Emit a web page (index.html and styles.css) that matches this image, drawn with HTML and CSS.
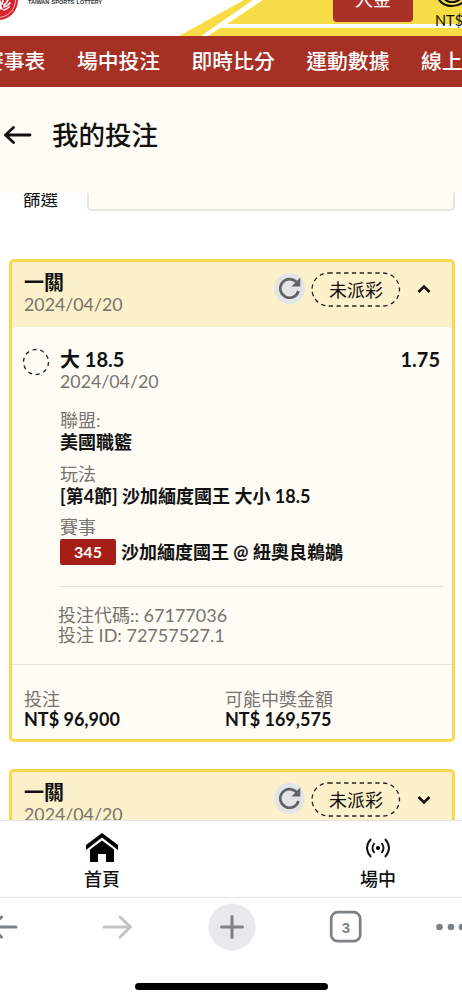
FILE: index.html
```html
<!DOCTYPE html>
<html lang="zh-Hant">
<head>
<meta charset="utf-8">
<meta name="viewport" content="width=device-width, initial-scale=1">
<title>我的投注</title>
<link rel="stylesheet" href="styles.css">
</head>
<body>
<div class="app">
  <header class="top">
    <svg class="top-art" width="462" height="36" viewBox="0 0 462 36">
      <path fill="#f8dc46" d="M179 36 244 0H462V36Z"/>
      <path fill="#fff" d="M201 36 253 0H263L227 24H462V28H220L208 36Z"/>
    </svg>
    <svg class="logo" width="20" height="22" viewBox="0 0 20 22">
      <circle cx="-2" cy="0" r="20" fill="#d8232f"/>
      <circle cx="-2" cy="0" r="17.5" fill="none" stroke="#fff" stroke-width=".7"/>
      <path fill="none" stroke="#fff" stroke-width="1.7" stroke-linecap="round" d="M0 1 1 9M3 0 2 4M8 0Q7 3 4 5M10 3Q8 6 4 7M9 7Q7 9 4 10M-1 4 2 9"/>
    </svg>
    <span class="logo-text">TAIWAN SPORTS LOTTERY</span>
    <button class="deposit">入金</button>
    <div class="balance">
      <svg width="26" height="9" viewBox="0 0 26 9"><path fill="none" stroke="#111" stroke-width="2.2" d="M1-2Q5 6 15 6T29-2M7-2Q9 2 15 2T24-2"/></svg>
      <span>NT$</span>
    </div>
  </header>
  <nav class="menu"><a>賽事表</a><a>場中投注</a><a>即時比分</a><a>運動數據</a><a>線上</a></nav>
  <div class="title">
    <svg width="28" height="20" viewBox="0 0 28 20"><path fill="none" stroke="#111" stroke-width="2.8" stroke-linecap="round" stroke-linejoin="round" d="M26 10H1.500M9.500 2.500 1.500 10 9.500 17.500"/></svg>
    <h1>我的投注</h1>
  </div>
  <main class="content">
    <div class="filter"><label>篩選</label><div class="field"></div></div>
    <section class="card">
      <div class="card-head">
        <div class="card-name"><b>一關</b><span>2024/04/20</span></div>
        <svg class="refresh" width="31" height="31" viewBox="0 0 31 31"><circle cx="15.500" cy="15.500" r="15.500" fill="#e3e4e6"/><path fill="none" stroke="#626366" stroke-width="2.700" d="M22.500 9.200A9.300 9.300 0 1 0 24.500 18"/><path fill="#626366" d="M26.300 4.500V13.500H17.500Z"/></svg>
        <div class="status"><svg width="90" height="35" viewBox="0 0 90 35"><rect x="1" y="1" width="87.500" height="33" rx="16.500" fill="none" stroke="#222" stroke-width="1.300" stroke-dasharray="4.300 3.500"/></svg><span>未派彩</span></div>
        <svg class="chev" width="14" height="10" viewBox="0 0 14 10"><path fill="none" stroke="#111" stroke-width="2.600" d="M1.500 8 7 2.500 12.500 8"/></svg>
      </div>
      <div class="bet">
        <svg class="ring" width="28" height="28" viewBox="0 0 28 28"><circle cx="14" cy="14" r="12.500" fill="none" stroke="#222" stroke-width="1.300" stroke-dasharray="4.100 3.750"/></svg>
        <div class="bet-info">
          <div class="pick"><b>大 18.5</b><b>1.75</b></div>
          <div class="muted date">2024/04/20</div>
          <dl>
            <dt>聯盟:</dt><dd>美國職籃</dd>
            <dt>玩法</dt><dd>[第4節] 沙加緬度國王 大小 18.5</dd>
            <dt>賽事</dt><dd class="match"><span class="tag">345</span>沙加緬度國王 @ 紐奧良鵜鶘</dd>
          </dl>
          <div class="codes"><div>投注代碼:: 67177036</div><div>投注 ID: 72757527.1</div></div>
        </div>
      </div>
      <div class="totals">
        <div><span>投注</span><b>NT$ 96,900</b></div>
        <div><span>可能中獎金額</span><b>NT$ 169,575</b></div>
      </div>
    </section>
    <section class="card">
      <div class="card-head">
        <div class="card-name"><b>一關</b><span>2024/04/20</span></div>
        <svg class="refresh" width="31" height="31" viewBox="0 0 31 31"><circle cx="15.500" cy="15.500" r="15.500" fill="#e3e4e6"/><path fill="none" stroke="#626366" stroke-width="2.700" d="M22.500 9.200A9.300 9.300 0 1 0 24.500 18"/><path fill="#626366" d="M26.300 4.500V13.500H17.500Z"/></svg>
        <div class="status"><svg width="90" height="35" viewBox="0 0 90 35"><rect x="1" y="1" width="87.500" height="33" rx="16.500" fill="none" stroke="#222" stroke-width="1.300" stroke-dasharray="4.300 3.500"/></svg><span>未派彩</span></div>
        <svg class="chev" width="14" height="10" viewBox="0 0 14 10"><path fill="none" stroke="#111" stroke-width="2.600" d="M1.500 3 7 8.500 12.500 3"/></svg>
      </div>
    </section>
  </main>
  <nav class="tabs">
    <a class="tab home">
      <svg width="34" height="30" viewBox="0 0 34 30"><path d="M17 0 33 12V17L17 4.500 1 17V12Z"/><path d="M17 7.500 29 16.500V29H21V21H13V29H5V16.500Z"/></svg>
      <span>首頁</span>
    </a>
    <a class="tab live">
      <svg width="26" height="30" viewBox="0 0 26 30"><circle cx="13" cy="15" r="2.100"/><path fill="none" stroke="#111" stroke-width="1.900" d="M9.500 10Q5.500 15 9.500 20M16.500 10Q20.500 15 16.500 20M6 6Q-2 15 6 24M20 6Q28 15 20 24"/></svg>
      <span>場中</span>
    </a>
  </nav>
  <footer class="browser">
    <svg class="controls" width="462" height="60" viewBox="0 0 462 60">
      <g fill="none" stroke="#7d8287" stroke-width="3" stroke-linecap="round" stroke-linejoin="round">
        <path d="M16 29H-12M1.500 19-9 29 1.500 39"/>
        <path stroke="#c4c4c4" d="M104 29H130M120 19 130.500 29 120 39"/>
      </g>
      <circle cx="232" cy="29" r="23.500" fill="#e8e9ed"/>
      <path fill="none" stroke="#7d8287" stroke-width="3" stroke-linecap="round" d="M221.500 29H242.500M232 18.500V39.500"/>
      <rect x="331.200" y="14.200" width="29" height="29" rx="6.500" fill="none" stroke="#7d8287" stroke-width="2.700"/>
      <text class="count" x="346" y="34.500" text-anchor="middle">3</text>
      <g fill="#7d8287"><circle cx="439.500" cy="29" r="3.300"/><circle cx="451" cy="29" r="3.300"/><circle cx="462" cy="29" r="3.300"/></g>
    </svg>
    <div class="home-bar"></div>
  </footer>
</div>
</body>
</html>
```
FILE: styles.css
```css
* { box-sizing: border-box; }
body { margin: 0; background: #fefefe; color: #111; font-family: Lato, "Noto Sans CJK TC", sans-serif; }
svg { display: block; flex: none; }
.app { width: 462px; height: 1000px; display: flex; flex-direction: column; overflow: hidden; }
.top { position: relative; height: 36px; flex: none; display: flex; align-items: flex-start; overflow: hidden; }
.top-art { position: absolute; left: 0; top: 0; }
.logo, .logo-text, .deposit, .balance { position: relative; flex: none; }
.logo-text { margin-left: 8px; width: 305px; margin-top: -2px; font: bold 5.500px/9px "Liberation Sans", sans-serif; word-spacing: .8px; white-space: nowrap; color: #333; }
.deposit { margin-top: -18px; width: 80px; height: 40px; border: 0; border-radius: 4px; background: #a93125; color: #fff; padding: 0 0 6px; font: 18px/34px Lato, "Noto Sans CJK TC", sans-serif; }
.balance { margin-left: 22px; width: 40px; font-size: 14.500px; line-height: 22px; }
.balance svg { margin-left: 2px; }
.balance span { display: block; margin-top: 1px; }
.menu { height: 51px; flex: none; display: flex; gap: 31.500px; background: #a73024; color: #fff; font-size: 20.800px; font-weight: 500; line-height: 49px; white-space: nowrap; }
.menu a { flex: none; }
.menu a:first-child { margin-left: -17px; }
.title { height: 106px; flex: none; display: flex; align-items: center; gap: 20px; padding: 0 0 10px 4px; background: #fffcf5; }
.title h1 { margin: 0; font-size: 26.500px; line-height: 36px; font-weight: 500; }
.content { height: 627px; flex: none; overflow: hidden; padding: 0 7px 0 9px; }
.filter { display: flex; height: 18px; margin-bottom: 48px; }
.filter label { width: 78px; padding-left: 14px; font-size: 17.500px; line-height: 26px; margin-top: -6px; height: 26px; clip-path: inset(6px 0 0); }
.field { flex: 1; border: 2px solid #e8e6e3; border-top: 0; border-radius: 0 0 5px 5px; background: #fffcf5; }
.card { width: 446px; border: 3px solid #f8d850; border-radius: 5px; background: #fffcf5; margin-bottom: 27px; overflow: hidden; }
.card-head { height: 65px; display: flex; align-items: flex-start; background: #fcf1cb; padding: 10px 0 0 12px; }
.card-name { width: 250px; display: flex; flex-direction: column; }
.card-name b { font-size: 20px; line-height: 21px; }
.card-name span { font-size: 17.800px; line-height: 22px; color: #77746a; }
.refresh { margin-top: 1px; }
.status { position: relative; width: 90px; margin-left: 6px; height: 35px; text-align: center; font-size: 18px; line-height: 36px; }
.status svg { position: absolute; inset: 0; }
.chev { margin: 12px 0 0 16px; }
.bet { display: flex; gap: 10px; height: 338px; padding: 20px 9px 0 10px; border-bottom: 1.500px solid #e8e5df; }
.ring { margin-top: 1px; }
.bet-info { flex: 1; white-space: nowrap; }
.pick { display: flex; justify-content: space-between; padding-right: 3px; font-size: 20px; line-height: 24px; }
.date { font-size: 17.800px; line-height: 20px; }
.muted, dt, .codes, .totals span { color: #77746f; }
dl { margin: 18px 0 0; font-size: 18px; }
dt { line-height: 22px; }
dd { margin: 0 0 9.500px; line-height: 22px; font-weight: 700; }
.match { display: flex; align-items: center; line-height: 26px; height: 26px; gap: 5px; margin-top: 1px; }
.tag { width: 56px; height: 26px; border-radius: 2px; background: #a51e15; color: #fff; text-align: center; font-size: 16px; line-height: 26px; }
.codes { border-top: 1.500px solid #e4e1dc; margin-top: 21px; padding-top: 18px; font-size: 18px; line-height: 20px; }
.codes div { margin-left: -2px; }
.totals { height: 74px; display: flex; padding: 24px 0 0 12px; }
.totals div { width: 201px; display: flex; flex-direction: column; font-size: 18px; line-height: 20px; }
.tabs { height: 78px; flex: none; position: relative; display: flex; justify-content: space-between; border-top: 1.500px solid #e3e3e5; border-bottom: 1.500px solid #e3e3e5; padding: 12px 64px 0 82px; }
.tab { display: flex; flex-direction: column; align-items: center; width: 40px; font-size: 18px; line-height: 26px; font-weight: 500; }
.tab span { margin-top: 3px; white-space: nowrap; }
.browser { height: 102px; flex: none; display: flex; flex-direction: column; align-items: center; }
.count { font: bold 15px "Liberation Sans", sans-serif; fill: #7d8287; }
.home-bar { width: 193px; height: 7px; margin-top: 25px; border-radius: 4px; background: #000; }
```
